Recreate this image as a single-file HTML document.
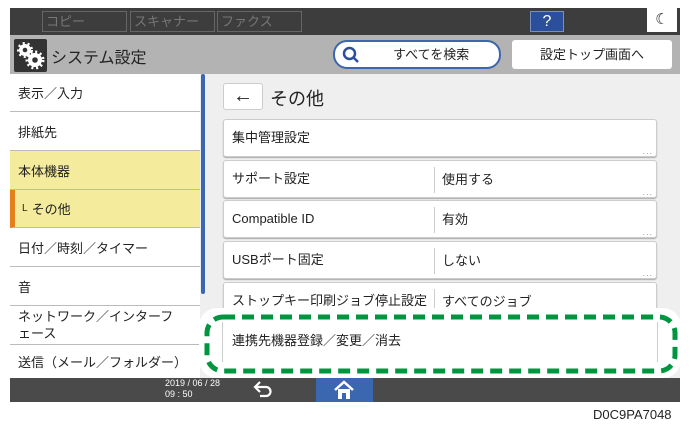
<!DOCTYPE html>
<html><head><meta charset="utf-8"><style>
*{margin:0;padding:0;box-sizing:border-box}
body{width:691px;height:427px;background:#fff;font-family:"Liberation Sans","Noto Sans CJK JP",sans-serif;position:relative;overflow:hidden;color:#222}
.a{position:absolute}
.top{left:10px;top:8px;width:670px;height:27px;background:#3d3d3d}
.tab{top:11px;height:21px;border:1px solid #666;color:#777;font-size:13px;line-height:19px;padding-left:3px}
.hdr{left:10px;top:35px;width:670px;height:39px;background:#b3b3b3}
.side{left:10px;width:190px;background:#fff;border-bottom:1px solid #bbb;font-size:13px;padding-left:8px;display:flex;align-items:center}
.y{background:#f4ec9c}
.cont{left:200px;top:74px;width:480px;height:304px;background:#efefef}
.row{left:223px;width:434px;background:#fff;border:1px solid #ccc;border-radius:3px;box-shadow:0 1px 1px #aaa;font-size:13px;line-height:36px;padding-left:8px}
.row .v{position:absolute;left:210px;top:6px;height:26px;border-left:1px solid #ccc;padding-left:7px;line-height:26px}
.row .d{position:absolute;right:3px;bottom:-13px;font-size:9px;color:#999;letter-spacing:1px}
.bot{left:10px;top:378px;width:670px;height:24px;background:#4a4a4a}
</style></head><body>
<div class="a top"></div>
<div class="a tab" style="left:42px;width:85px">コピー</div>
<div class="a tab" style="left:130px;width:85px">スキャナー</div>
<div class="a tab" style="left:217px;width:85px">ファクス</div>
<div class="a" style="left:530px;top:11px;width:34px;height:21px;background:#2c4f9c;border:1px solid #7a8fc0;color:#fff;font-size:16px;text-align:center;line-height:19px">?</div>
<div class="a" style="left:647px;top:8px;width:30px;height:24px;background:#fff;font-size:15px;text-align:center;line-height:24px">☾</div>
<div class="a hdr"></div>
<div class="a" style="left:14px;top:39px;width:33px;height:33px;background:#333;border-radius:2px">
<svg width="33" height="33" viewBox="0 0 33 33"><g fill="#fff"><circle cx="11" cy="11" r="6"/><circle cx="21" cy="21" r="7"/></g><g fill="#fff" stroke="#fff" stroke-width="3" stroke-dasharray="2 2.7"><circle cx="11" cy="11" r="6.5" fill="none"/><circle cx="21" cy="21" r="8" fill="none"/></g><circle cx="11" cy="11" r="2.3" fill="#333"/><circle cx="21" cy="21" r="2.8" fill="#333"/></svg></div>
<div class="a" style="left:51px;top:44px;font-size:16px">システム設定</div>
<div class="a" style="left:333px;top:40px;width:168px;height:29px;background:#fff;border:2px solid #3b66b0;border-radius:14px;font-size:13px;line-height:25px;padding-left:58px">すべてを検索</div>
<svg class="a" style="left:342px;top:46px" width="18" height="18"><circle cx="7.5" cy="7.5" r="5.5" fill="none" stroke="#2c4f9c" stroke-width="2.5"/><path d="M11 11l5 5" stroke="#2c4f9c" stroke-width="2.5"/></svg>
<div class="a" style="left:512px;top:40px;width:160px;height:29px;background:#fff;border-radius:3px;font-size:13px;line-height:29px;text-align:center">設定トップ画面へ</div>
<div class="a side" style="top:74px;height:38px">表示／入力</div>
<div class="a side" style="top:112px;height:39px">排紙先</div>
<div class="a side y" style="top:151px;height:39px">本体機器</div>
<div class="a side y" style="top:190px;height:38px;border-left:5px solid #e57e1c;padding-left:7px"><span style="font-size:10px;margin-right:4px">L</span>その他</div>
<div class="a side" style="top:228px;height:39px">日付／時刻／タイマー</div>
<div class="a side" style="top:267px;height:39px">音</div>
<div class="a side" style="top:306px;height:39px;line-height:17px;padding-right:14px">ネットワーク／インターフェース</div>
<div class="a side" style="top:345px;height:33px;border:0">送信（メール／フォルダー）</div>
<div class="a" style="left:200px;top:74px;width:1px;height:304px;background:#bbb"></div>
<div class="a cont"></div>
<div class="a" style="left:201px;top:74px;width:4px;height:220px;background:#3b66b0;border-radius:2px"></div>
<div class="a" style="left:223px;top:83px;width:40px;height:27px;background:#fff;border:1px solid #ccc;border-radius:3px;text-align:center;font-size:20px;line-height:24px">←</div>
<div class="a" style="left:270px;top:85px;font-size:18px">その他</div>
<div class="a row" style="top:119px;height:38px">集中管理設定<span class="d">...</span></div>
<div class="a row" style="top:160px;height:38px">サポート設定<span class="v">使用する</span><span class="d">...</span></div>
<div class="a row" style="top:200px;height:38px">Compatible ID<span class="v">有効</span><span class="d">...</span></div>
<div class="a row" style="top:241px;height:38px">USBポート固定<span class="v">しない</span><span class="d">...</span></div>
<div class="a row" style="top:282px;height:38px">ストップキー印刷ジョブ停止設定<span class="v">すべてのジョブ</span></div>
<div class="a" style="left:199px;top:308px;width:482px;height:70px;background:#fff;border-radius:18px"></div>
<div class="a" style="left:222px;top:322px;width:436px;height:40px;border-left:1px solid #ccc;border-right:1px solid #ccc;font-size:13px;line-height:38px;padding-left:9px">連携先機器登録／変更／消去</div>
<svg class="a" style="left:204px;top:314px" width="474" height="60"><rect x="3" y="3" width="468" height="54" rx="16" fill="none" stroke="#00963f" stroke-width="5" stroke-dasharray="12 7"/></svg>
<div class="a bot"></div>
<div class="a" style="left:165px;top:378px;color:#fff;font-size:9px;line-height:11px">2019 / 06 / 28<br>09 : 50</div>
<svg class="a" style="left:252px;top:380px" width="22" height="20"><path d="M4 7h10a4.5 4.5 0 0 1 0 9H8" fill="none" stroke="#fff" stroke-width="2.2"/><path d="M8 2L3 7l5 5" fill="none" stroke="#fff" stroke-width="2.2"/></svg>
<div class="a" style="left:316px;top:378px;width:57px;height:24px;background:#3b66b0"></div>
<svg class="a" style="left:333px;top:379px" width="22" height="21"><path d="M2 11L11 3l9 8" fill="none" stroke="#fff" stroke-width="2.5"/><path d="M5 10v10h4v-6h4v6h4V10" fill="#fff"/></svg>
<div class="a" style="left:593px;top:407px;font-size:13px;color:#222">D0C9PA7048</div>
</body></html>
